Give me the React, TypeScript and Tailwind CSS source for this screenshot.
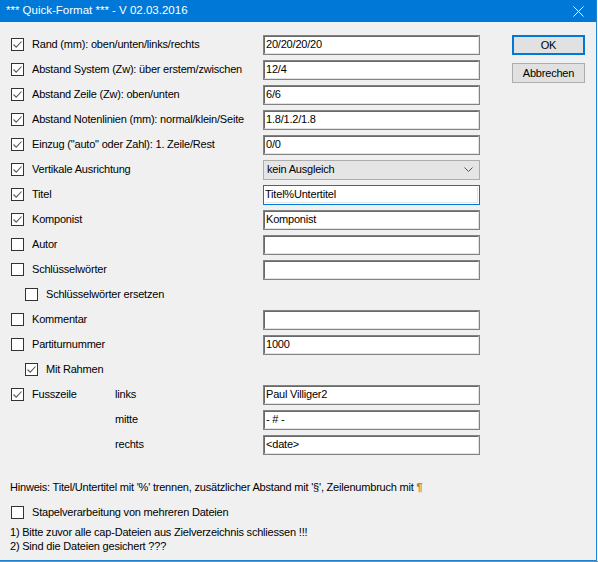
import React from "react";

const F = { fontFamily: '"Liberation Sans", Arial, sans-serif' };

function Check({ checked }: { checked?: boolean }) {
  return (
    <div className="w-[13px] h-[13px] border border-[#333333] bg-white flex items-center justify-center shrink-0">
      {checked && (
        <svg width="11" height="11" viewBox="0 0 11 11">
          <path d="M1.5 5.5 L4.2 8.2 L9.5 2.5" fill="none" stroke="#5a5a5a" strokeWidth="1.1" />
        </svg>
      )}
    </div>
  );
}

function Input({ value, focused }: { value?: string; focused?: boolean }) {
  return (
    <div
      className={
        focused
          ? "w-[217px] h-[20px] border border-[#0078d7] p-[1px] bg-white"
          : "w-[217px] h-[20px] border border-[#828282] bg-white"
      }
    >
      <div
        className={
          focused
            ? "w-full h-full border-r border-b border-[#e3e3e3] flex items-center text-[11px] tracking-[-0.2px] text-black leading-none"
            : "w-full h-full border-t border-l border-[#696969] border-r-[#e3e3e3] border-b-[#e3e3e3] border-r border-b flex items-center pl-[1px] text-[11px] tracking-[-0.2px] text-black leading-none"
        }
      >
        {value}
      </div>
    </div>
  );
}

function Select({ value }: { value: string }) {
  return (
    <div className="w-[217px] h-[20px] border border-[#adadad] bg-[#e5e5e5] flex items-center pl-[3px] pr-[6px] text-[11px] tracking-[-0.2px] text-black">
      <span className="flex-1">{value}</span>
      <svg width="9" height="6" viewBox="0 0 9 6">
        <path d="M0.5 0.5 L4.5 4.5 L8.5 0.5" fill="none" stroke="#555" strokeWidth="1" />
      </svg>
    </div>
  );
}

type Row = {
  label?: string;
  checked?: boolean;
  hasCheck?: boolean;
  indent?: boolean;
  sub?: string;
  input?: string;
  select?: string;
  focused?: boolean;
};

const rows: Row[] = [
  { label: "Rand (mm): oben/unten/links/rechts", checked: true, hasCheck: true, input: "20/20/20/20" },
  { label: "Abstand System (Zw): über erstem/zwischen", checked: true, hasCheck: true, input: "12/4" },
  { label: "Abstand Zeile (Zw): oben/unten", checked: true, hasCheck: true, input: "6/6" },
  { label: "Abstand Notenlinien (mm): normal/klein/Seite", checked: true, hasCheck: true, input: "1.8/1.2/1.8" },
  { label: 'Einzug ("auto" oder Zahl): 1. Zeile/Rest', checked: true, hasCheck: true, input: "0/0" },
  { label: "Vertikale Ausrichtung", checked: true, hasCheck: true, select: "kein Ausgleich" },
  { label: "Titel", checked: true, hasCheck: true, input: "Titel%Untertitel", focused: true },
  { label: "Komponist", checked: true, hasCheck: true, input: "Komponist" },
  { label: "Autor", hasCheck: true, input: "" },
  { label: "Schlüsselwörter", hasCheck: true, input: "" },
  { label: "Schlüsselwörter ersetzen", hasCheck: true, indent: true },
  { label: "Kommentar", hasCheck: true, input: "" },
  { label: "Partiturnummer", hasCheck: true, input: "1000" },
  { label: "Mit Rahmen", hasCheck: true, checked: true, indent: true },
  { label: "Fusszeile", hasCheck: true, checked: true, sub: "links", input: "Paul Villiger2" },
  { sub: "mitte", input: "- # -" },
  { sub: "rechts", input: "<date>" },
];

export default function App() {
  return (
    <div className="w-[598px] h-[562px] bg-[#8a8a8a] flex flex-col" style={F}>
      <div className="flex h-[561px]">
        <div className="w-[597px] h-[561px] bg-[#f0f0f0] border-r border-b border-[#1883d7] flex flex-col">
          {/* title bar */}
          <div className="h-[22px] bg-[#0078d7] flex items-center pl-[6px] pr-[12px] shrink-0">
            <span className="flex-1 text-white text-[11.5px] leading-none">*** Quick-Format *** - V 02.03.2016</span>
            <svg width="11" height="11" viewBox="0 0 11 11">
              <path d="M0.5 0.5 L10.5 10.5 M10.5 0.5 L0.5 10.5" stroke="white" strokeWidth="1" />
            </svg>
          </div>
          {/* body */}
          <div className="flex pt-[10px]">
            <div className="w-[480px] flex flex-col">
              {rows.map((r, i) => (
                <div key={i} className="h-[25px] flex items-center text-[11px] tracking-[-0.2px] text-black">
                  <div className={r.indent ? "pl-[25px] flex items-center gap-[8px] w-[263px]" : "pl-[11px] flex items-center w-[263px]"}>
                    {r.hasCheck ? <Check checked={r.checked} /> : <div className="w-[13px]" />}
                    {r.sub ? (
                      <>
                        <span className="ml-[8px] w-[83px] whitespace-nowrap">{r.label}</span>
                        <span className="whitespace-nowrap">{r.sub}</span>
                      </>
                    ) : (
                      <span className={r.indent ? "whitespace-nowrap" : "ml-[8px] whitespace-nowrap"}>{r.label}</span>
                    )}
                  </div>
                  {r.select ? <Select value={r.select} /> : r.input !== undefined ? <Input value={r.input} focused={r.focused} /> : null}
                </div>
              ))}
            </div>
            <div className="ml-[32px] pt-[3px] flex flex-col gap-[8px]">
              <div className="w-[73px] h-[20px] border-2 border-[#0078d7] bg-[#e1e1e1] flex items-center justify-center text-[11px] tracking-[-0.2px] text-black">
                OK
              </div>
              <div className="w-[73px] h-[20px] border border-[#adadad] bg-[#e1e1e1] flex items-center justify-center text-[11px] tracking-[-0.2px] text-black">
                Abbrechen
              </div>
            </div>
          </div>
          {/* footer */}
          <div className="pl-[10px] mt-[23px] h-[14px] flex items-center text-[11px] tracking-[-0.2px] text-black whitespace-nowrap">
            Hinweis: Titel/Untertitel mit '%' trennen, zusätzlicher Abstand mit '§', Zeilenumbruch mit&nbsp;
            <span className="text-[#c8782a] font-bold">¶</span>
          </div>
          <div className="pl-[11px] mt-[12px] h-[13px] flex items-center gap-[8px] text-[11px] tracking-[-0.2px] text-black">
            <Check />
            <span>Stapelverarbeitung von mehreren Dateien</span>
          </div>
          <div className="pl-[10px] mt-[6px] text-[11px] tracking-[-0.2px] leading-[14px] text-black">
            <div>1) Bitte zuvor alle cap-Dateien aus Zielverzeichnis schliessen !!!</div>
            <div>2) Sind die Dateien gesichert ???</div>
          </div>
        </div>
        <div className="w-[1px] h-full bg-white" />
      </div>
    </div>
  );
}
